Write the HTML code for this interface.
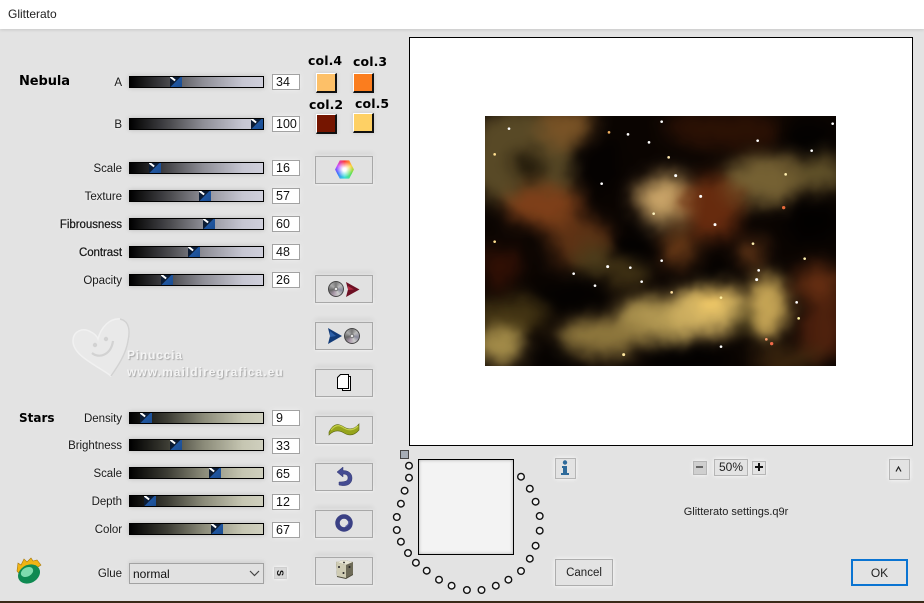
<!DOCTYPE html>
<html>
<head>
<meta charset="utf-8">
<title>Glitterato</title>
<style>
html,body{margin:0;padding:0;width:924px;height:603px;overflow:hidden;background:#e3e3e3;font-family:"Liberation Sans",Arial,sans-serif;color:#111}
#wrap{position:relative;width:924px;height:603px;overflow:hidden}
#wrap>*{position:absolute}
.title{left:0;top:0;width:924px;height:29px;background:#fff;box-shadow:0 1px 3px rgba(0,0,0,.12)}
.tt{left:8px;top:7px;font-size:12px;color:#222}
.l{width:122px;left:0;text-align:right;font-size:11.5px;line-height:14px;color:#1a1a1a;top:0;text-shadow:0 0 3px #f4f4f4;letter-spacing:-.05px}
.s{left:129px;width:133px;height:10px;border:1px solid #000;box-shadow:0 0 5px rgba(0,0,0,.18)}
.n{background:linear-gradient(90deg,#000 0,#4a4a4e 30%,#8e8e96 55%,#c6c6d2 85%,#cfcfdb 100%)}
.g{background:linear-gradient(90deg,#000 0,#3c3c34 28%,#8a8a78 55%,#c6c6b2 85%,#cfcfbe 100%)}
.t{position:absolute;top:0;width:12px;height:10px;background:linear-gradient(135deg,#0c1c34 0,#0c1c34 45%,#1f56a0 50%,#1b4c90 100%);overflow:hidden}
.t:after{content:"";position:absolute;left:1px;top:-1px;width:6px;height:1.5px;background:#fff;transform:rotate(38deg);transform-origin:0 0}
.i{left:272px;height:14px;background:#fff;border:1px solid #a2a2a2;font-size:12.5px;line-height:15px;color:#111;width:26px;box-shadow:0 0 5px rgba(255,255,255,.9),0 0 4px rgba(0,0,0,.08);text-indent:3px}
.b{left:315px;width:56px;height:26px;border:1px solid #a8a8a8;background:#e1e1e1;box-shadow:0 -3px 5px rgba(0,0,0,.07),0 0 3px rgba(255,255,255,.9)}
.c{width:18px;height:17px;border-top:1px solid #fff;border-left:1px solid #fff;border-right:2px solid #111;border-bottom:2px solid #111;box-shadow:0 0 4px rgba(0,0,0,.12)}
.cl{font-family:"DejaVu Sans",sans-serif;font-weight:bold;font-size:12.5px;line-height:14px;color:#000;letter-spacing:.1px}
.h{font-family:"DejaVu Sans",sans-serif;font-weight:bold;color:#000;font-size:13px;line-height:16px}
.sb{background:#e3e3e3;border:1px solid #b6b6b6;box-shadow:0 0 4px rgba(255,255,255,.9);text-align:center;font-size:12px}
</style>
</head>
<body>
<div id="wrap">
<div class="title"></div>
<div class="tt">Glitterato</div>

<div class="h" style="left:19px;top:74px;font-size:13px;letter-spacing:-.1px">Nebula</div>
<div class="h" style="left:19px;top:410px;font-size:12px">Stars</div>

<div class="l" style="top:76px">A</div>
<div class="l" style="top:118px">B</div>
<div class="l" style="top:162px">Scale</div>
<div class="l" style="top:190px">Texture</div>
<div class="l" style="top:218px;-webkit-text-stroke:.2px #000">Fibrousness</div>
<div class="l" style="top:246px;-webkit-text-stroke:.2px #000">Contrast</div>
<div class="l" style="top:274px">Opacity</div>
<div class="l" style="top:412px">Density</div>
<div class="l" style="top:439px">Brightness</div>
<div class="l" style="top:467px">Scale</div>
<div class="l" style="top:495px">Depth</div>
<div class="l" style="top:523px">Color</div>
<div class="l" style="top:567px">Glue</div>

<div class="s n" style="top:76px"><div class="t" style="left:40px"></div></div>
<div class="s n" style="top:118px"><div class="t" style="left:121px"></div></div>
<div class="s n" style="top:162px"><div class="t" style="left:19px"></div></div>
<div class="s n" style="top:190px"><div class="t" style="left:69px"></div></div>
<div class="s n" style="top:218px"><div class="t" style="left:73px"></div></div>
<div class="s n" style="top:246px"><div class="t" style="left:58px"></div></div>
<div class="s n" style="top:274px"><div class="t" style="left:31px"></div></div>
<div class="s g" style="top:412px"><div class="t" style="left:10px"></div></div>
<div class="s g" style="top:439px"><div class="t" style="left:40px"></div></div>
<div class="s g" style="top:467px"><div class="t" style="left:79px"></div></div>
<div class="s g" style="top:495px"><div class="t" style="left:14px"></div></div>
<div class="s g" style="top:523px"><div class="t" style="left:81px"></div></div>

<div class="i" style="top:74px">34</div>
<div class="i" style="top:116px">100</div>
<div class="i" style="top:160px">16</div>
<div class="i" style="top:188px">57</div>
<div class="i" style="top:216px">60</div>
<div class="i" style="top:244px">48</div>
<div class="i" style="top:272px">26</div>
<div class="i" style="top:410px">9</div>
<div class="i" style="top:438px">33</div>
<div class="i" style="top:466px">65</div>
<div class="i" style="top:494px">12</div>
<div class="i" style="top:522px">67</div>

<div class="cl" style="left:308px;top:54px">col.4</div>
<div class="cl" style="left:353px;top:55px">col.3</div>
<div class="cl" style="left:309px;top:98px">col.2</div>
<div class="cl" style="left:355px;top:97px">col.5</div>
<div class="c" style="left:316px;top:73px;background:#fdc068"></div>
<div class="c" style="left:353px;top:73px;background:#fb7d1e"></div>
<div class="c" style="left:316px;top:114px;background:#751500"></div>
<div class="c" style="left:353px;top:113px;background:#fed064"></div>

<div class="b" style="top:156px"></div>
<div class="b" style="top:275px"></div>
<div class="b" style="top:322px"></div>
<div class="b" style="top:369px"></div>
<div class="b" style="top:416px"></div>
<div class="b" style="top:463px"></div>
<div class="b" style="top:510px"></div>
<div class="b" style="top:557px"></div>

<!-- colour hexagon -->
<div style="left:335px;top:160px;width:19px;height:19px;background:conic-gradient(#ff3b3b,#ffd23a,#5fe04a,#38e0d8,#3a6cff,#c84aff,#ff3b3b);clip-path:polygon(25% 2%,75% 2%,100% 50%,75% 98%,25% 98%,0 50%)"></div>
<div style="left:337px;top:162px;width:15px;height:15px;border-radius:50%;background:radial-gradient(#fff 15%,rgba(255,255,255,0) 75%)"></div>

<!-- CD + red arrow -->
<div style="left:328px;top:281px;width:16px;height:16px;border-radius:50%;background:radial-gradient(#e8e8e8 0 10%,#777 12% 18%,rgba(0,0,0,0) 22%),conic-gradient(#777,#bbb,#889,#ccc,#a9a,#666,#aaa,#777);box-shadow:inset 0 0 0 1px #444"></div>
<svg style="left:345px;top:282px" width="15" height="15" viewBox="0 0 15 15"><path d="M1 0 L14.500 7.500 L1 15 L3 7.500Z" fill="#6e1024"/><path d="M3 4 L9 7.500 L3 8Z" fill="#b02a40"/></svg>
<!-- blue arrow + CD -->
<svg style="left:328px;top:328px" width="15" height="16" viewBox="0 0 15 16"><path d="M0 0 L14 8 L0 16 L2 8Z" fill="#123b78"/><path d="M2 3 L8 8 L2 9Z" fill="#2b5fa8"/></svg>
<div style="left:344px;top:328px;width:16px;height:16px;border-radius:50%;background:radial-gradient(#e8e8e8 0 10%,#777 12% 18%,rgba(0,0,0,0) 22%),conic-gradient(#777,#bbb,#889,#ccc,#a9a,#666,#aaa,#777);box-shadow:inset 0 0 0 1px #444"></div>
<!-- pages -->
<svg style="left:335px;top:373px" width="18" height="19" viewBox="0 0 18 19"><path d="M7.500 3.500H15.500V17.500H7.500Z" fill="#fff" stroke="#000"/><path d="M5.500 1.500H13.500V15.500H2.500V4.500Z" fill="#fff" stroke="#000"/></svg>
<!-- wave -->
<svg style="left:328px;top:421px" width="32" height="16" viewBox="0 0 32 16"><path d="M1 11 C6 1 11 3 16 6 C21 9 26 9 31 3 L31 9 C26 15 21 15 16 12 C11 9 6 9 1 14Z" fill="#96a41c" stroke="#5f6a14" stroke-width=".6"/><path d="M3 9 C8 3 12 4 16 7 C21 10 26 9 30 5" fill="none" stroke="#c4cf4a" stroke-width="1.300"/></svg>
<!-- undo -->
<svg style="left:336px;top:467px" width="17" height="20" viewBox="0 0 17 20"><path d="M7 0 L1 5 L7 10 L7 7 C11 7 12 9 12 11 C12 14 9 15 3 15 L3 18 C11 20 16 17 16 11 C16 6 12 3.500 7 3.500Z" fill="#454c92" stroke="#2f3470" stroke-width=".5"/></svg>
<!-- ring -->
<svg style="left:335px;top:514px" width="18" height="18" viewBox="0 0 18 18"><circle cx="9" cy="9" r="6.500" fill="none" stroke="#3a4084" stroke-width="4.500"/><circle cx="8" cy="7" r="6" fill="none" stroke="#6067aa" stroke-width="1" stroke-dasharray="7 40"/></svg>
<!-- dice -->
<svg style="left:334px;top:559px" width="21" height="21" viewBox="0 0 21 21"><path d="M2 3 L10 1 L19 3 L19 16 L12 20 L3 18Z" fill="#4c4a3a"/><path d="M2 3 L10 1 L19 3 L12 6Z" fill="#e8e6d4"/><path d="M2 3 L12 6 L12 19 L3 17Z" fill="#cfccb4"/><path d="M12 6 L19 3 L19 15 L12 19Z" fill="#6e6b58"/><circle cx="10" cy="3.500" r=".9" fill="#222"/><circle cx="5" cy="8" r="1" fill="#222"/><circle cx="9.500" cy="14" r="1" fill="#222"/><circle cx="15.500" cy="8" r="1" fill="#222"/></svg>

<!-- Watermark -->
<svg style="left:68px;top:314px" width="66" height="66" viewBox="0 0 66 66"><path d="M43 62 C30 52 5 42 5 27 C5 17 15 13 23 18 C27 20 29 22 30 25 C33 13 42 4 52 5 C62 7 62 18 60 27 C58 40 50 52 43 62Z" fill="#e9e9e9" stroke="#f1f1f1" stroke-width="1.500"/><path d="M43 62 C50 52 58 40 60 27 C62 18 62 7 52 5" fill="none" stroke="#d2d2d2" stroke-width="1.500"/><circle cx="27" cy="31" r="2.200" fill="#d2d2d2"/><circle cx="38" cy="25" r="2.200" fill="#d2d2d2"/><path d="M24 39 C31 45 43 41 45 27" fill="none" stroke="#d2d2d2" stroke-width="2.200"/></svg>
<div style="left:127px;top:348px;font-size:12px;font-weight:bold;color:#f4f4f4;letter-spacing:.8px;text-shadow:1px 1px 1px #a8a8a8">Pinuccia</div>
<div style="left:127px;top:365px;font-size:12px;font-weight:bold;color:#f4f4f4;letter-spacing:1.05px;text-shadow:1px 1px 1px #a8a8a8;white-space:nowrap">www.maildiregrafica.eu</div>

<!-- Flame logo -->
<svg style="left:15px;top:556px" width="29" height="29" viewBox="0 0 29 29"><path d="M2 15 L3 7 L6 9 L9 3 L12 6 L16 2 L18 5 L22 4 L26 9 L20 13 L8 22Z" fill="#f0b414" stroke="#a87808" stroke-width=".6"/><ellipse cx="14" cy="18" rx="11.500" ry="9" transform="rotate(-28 14 18)" fill="#0f8a52"/><ellipse cx="12" cy="16" rx="6.500" ry="4.500" transform="rotate(-28 12 16)" fill="#7fdcae"/></svg>

<!-- Glue select -->
<div style="left:129px;top:563px;width:133px;height:19px;border:1px solid #a2a2a2;background:#e1e1e1;box-shadow:0 -2px 4px rgba(0,0,0,.08)"></div>
<div style="left:133px;top:567px;font-size:12px;color:#111">normal</div>
<svg style="left:249px;top:570px" width="11" height="7" viewBox="0 0 11 7"><path d="M1 1 L5.500 5.500 L10 1" fill="none" stroke="#444" stroke-width="1.200"/></svg>
<div style="left:274px;top:567px;width:11px;height:10px;border:1px solid #cfcfcf;background:#d8d8d8;box-shadow:0 0 3px #fff;font-size:9px;line-height:10px;text-align:center;font-weight:bold"><span style="display:inline-block;transform:rotate(90deg)">S</span></div>

<!-- Preview -->
<div style="left:409px;top:37px;width:502px;height:407px;background:#fff;border:1px solid #000"></div>
<svg style="left:485px;top:116px;background:#000" width="351" height="250" viewBox="15 18 1053 750">
<defs>
<filter id="blur" x="-20%" y="-20%" width="140%" height="140%" color-interpolation-filters="sRGB">
<feGaussianBlur in="SourceGraphic" stdDeviation="26" result="b"/>
<feTurbulence type="fractalNoise" baseFrequency="0.011" numOctaves="4" seed="11" result="n"/>
<feDisplacementMap in="b" in2="n" scale="42" xChannelSelector="R" yChannelSelector="G" result="d"/>
<feGaussianBlur in="d" stdDeviation="5" result="soft"/>
<feComponentTransfer in="soft">
<feFuncR type="gamma" amplitude="1" exponent="1.200" offset="0"/>
<feFuncG type="gamma" amplitude="1" exponent="1.220" offset="0"/>
<feFuncB type="gamma" amplitude=".950" exponent="1.220" offset="0"/>
</feComponentTransfer>
</filter>
<clipPath id="cp"><rect x="15" y="18" width="1053" height="750"/></clipPath>
</defs>
<g clip-path="url(#cp)">
<g filter="url(#blur)">
<rect x="-50" y="-50" width="1200" height="900" fill="#120a05"/>
<ellipse cx="130" cy="150" rx="170" ry="160" fill="#6a5c38"/>
<ellipse cx="260" cy="50" rx="90" ry="60" fill="#8a6638"/>
<ellipse cx="150" cy="170" rx="45" ry="45" fill="#2a2210"/>
<ellipse cx="190" cy="290" rx="120" ry="65" fill="#8e5228"/>
<ellipse cx="300" cy="400" rx="100" ry="80" fill="#704422"/>
<ellipse cx="60" cy="470" rx="70" ry="65" fill="#401a0a"/>
<ellipse cx="340" cy="450" rx="60" ry="50" fill="#5c4e2a"/>
<ellipse cx="90" cy="620" rx="110" ry="60" fill="#52441f"/>
<ellipse cx="350" cy="170" rx="75" ry="95" fill="#0a0503"/>
<ellipse cx="470" cy="400" rx="65" ry="50" fill="#060302"/>
<ellipse cx="560" cy="270" rx="100" ry="85" fill="#b4986a"/>
<ellipse cx="545" cy="265" rx="55" ry="45" fill="#d4b482"/>
<ellipse cx="700" cy="290" rx="90" ry="100" fill="#783c1a"/>
<ellipse cx="600" cy="420" rx="60" ry="55" fill="#784a24"/>
<ellipse cx="740" cy="60" rx="190" ry="60" fill="#3a1c0a"/>
<ellipse cx="860" cy="210" rx="130" ry="75" fill="#867448"/>
<ellipse cx="1020" cy="190" rx="80" ry="55" fill="#72643c"/>
<ellipse cx="980" cy="80" rx="85" ry="45" fill="#060403"/>
<ellipse cx="1000" cy="340" rx="85" ry="60" fill="#060302"/>
<ellipse cx="810" cy="430" rx="45" ry="45" fill="#704624"/>
<ellipse cx="690" cy="480" rx="85" ry="35" fill="#080402"/>
<ellipse cx="1020" cy="520" rx="80" ry="65" fill="#743e1e"/>
<ellipse cx="1030" cy="660" rx="70" ry="100" fill="#603018"/>
<ellipse cx="270" cy="560" rx="110" ry="45" fill="#080503"/>
<ellipse cx="440" cy="490" rx="70" ry="45" fill="#524422"/>
<ellipse cx="540" cy="630" rx="150" ry="70" fill="#bca668"/>
<ellipse cx="680" cy="600" rx="110" ry="80" fill="#d6bc78"/>
<ellipse cx="695" cy="575" rx="45" ry="45" fill="#f6d480"/>
<ellipse cx="860" cy="590" rx="65" ry="100" fill="#ceb26c"/>
<ellipse cx="360" cy="680" rx="130" ry="60" fill="#9c8852"/>
<ellipse cx="790" cy="640" rx="22" ry="45" fill="#3a3418"/>
<ellipse cx="60" cy="710" rx="80" ry="60" fill="#b09c60"/>
<ellipse cx="220" cy="745" rx="60" ry="30" fill="#080503"/>
<ellipse cx="620" cy="745" rx="125" ry="45" fill="#060302"/>
<ellipse cx="920" cy="750" rx="110" ry="35" fill="#523a1c"/>
</g>
<g fill="#fff">
<circle cx="87" cy="56" r="4"/><circle cx="387" cy="67" r="4" fill="#f0b060"/><circle cx="444" cy="73" r="4"/><circle cx="545" cy="35" r="4"/><circle cx="507" cy="97" r="4"/><circle cx="833" cy="92" r="4"/><circle cx="995" cy="122" r="4"/><circle cx="1058" cy="41" r="4"/><circle cx="44" cy="133" r="4" fill="#ffe090"/><circle cx="566" cy="142" r="4" fill="#ffe8b0"/><circle cx="917" cy="193" r="4" fill="#fff0b0"/><circle cx="587" cy="197" r="4.500"/><circle cx="365" cy="221" r="4"/><circle cx="662" cy="259" r="4.500"/><circle cx="521" cy="311" r="4" fill="#fff4c0"/><circle cx="911" cy="293" r="5" fill="#e86a3a"/><circle cx="705" cy="344" r="4.500"/><circle cx="44" cy="395" r="4" fill="#ffe090"/><circle cx="819" cy="401" r="4" fill="#fff0b0"/><circle cx="974" cy="446" r="4" fill="#fff0b0"/><circle cx="545" cy="452" r="4"/><circle cx="383" cy="470" r="4.500"/><circle cx="451" cy="473" r="4"/><circle cx="281" cy="491" r="4"/><circle cx="836" cy="481" r="4"/><circle cx="830" cy="509" r="4.500"/><circle cx="485" cy="515" r="4"/><circle cx="345" cy="527" r="4"/><circle cx="575" cy="547" r="4" fill="#ffe0a0"/><circle cx="723" cy="563" r="4" fill="#fff0a0"/><circle cx="950" cy="577" r="4"/><circle cx="956" cy="625" r="4" fill="#fff4a0"/><circle cx="859" cy="688" r="4" fill="#ffa070"/><circle cx="875" cy="701" r="5" fill="#f06a4a"/><circle cx="723" cy="710" r="4"/><circle cx="431" cy="734" r="4.500" fill="#ffe8a0"/>
</g>
</g>
</svg>

<!-- Small preview + beads -->
<div style="left:418px;top:459px;width:94px;height:94px;background:#f3f3f3;border:1.500px solid #000;box-shadow:inset 0 0 3px rgba(0,0,0,.3)"></div>
<div style="left:400px;top:450px;width:7px;height:7px;background:#a6adb6;border:1px solid #444"></div>
<svg style="left:390px;top:455px" width="160" height="145" viewBox="390 455 160 145"><g fill="#f2f2f2" stroke="#111" stroke-width="1.400">
<circle cx="409" cy="465.700" r="3.300"/><circle cx="409" cy="477.700" r="3.300"/><circle cx="404.600" cy="490.700" r="3.300"/><circle cx="400.900" cy="503.700" r="3.300"/><circle cx="396.800" cy="517" r="3.300"/><circle cx="396.800" cy="530" r="3.300"/><circle cx="400.900" cy="541.700" r="3.300"/><circle cx="408" cy="553" r="3.300"/><circle cx="415.900" cy="562.700" r="3.300"/><circle cx="426.700" cy="570.700" r="3.300"/><circle cx="439" cy="579.700" r="3.300"/><circle cx="451.600" cy="585.700" r="3.300"/><circle cx="466.900" cy="590" r="3.300"/><circle cx="481.500" cy="590" r="3.300"/><circle cx="495.800" cy="585.700" r="3.300"/><circle cx="508.400" cy="579.700" r="3.300"/><circle cx="521" cy="571" r="3.300"/><circle cx="529.800" cy="558.700" r="3.300"/><circle cx="535.600" cy="545.700" r="3.300"/><circle cx="539.700" cy="530.700" r="3.300"/><circle cx="539.700" cy="516" r="3.300"/><circle cx="535.600" cy="501.700" r="3.300"/><circle cx="529.800" cy="488.700" r="3.300"/><circle cx="521" cy="476.700" r="3.300"/>
</g></svg>

<!-- Right controls -->
<div class="sb" style="left:555px;top:458px;width:19px;height:19px"></div>
<svg style="left:560px;top:460px" width="10" height="16" viewBox="0 0 10 16"><circle cx="5" cy="2.500" r="2.200" fill="#2e6a9a"/><path d="M2 6H7V13H9V15H1V13H3V8H2Z" fill="#2e6a9a"/></svg>
<div class="sb" style="left:693px;top:461px;width:12px;height:12px;background:#cfcfcf"></div>
<div style="left:696px;top:466px;width:7px;height:2px;background:#666"></div>
<div class="sb" style="left:714px;top:459px;width:32px;height:15px;line-height:15px;color:#222">50%</div>
<div class="sb" style="left:752px;top:461px;width:12px;height:12px"></div>
<div style="left:755px;top:466px;width:8px;height:2px;background:#111"></div>
<div style="left:758px;top:463px;width:2px;height:8px;background:#111"></div>
<div class="sb" style="left:889px;top:459px;width:19px;height:19px"></div>
<svg style="left:895px;top:466px" width="7" height="6" viewBox="0 0 7 6"><path d="M1 5.500 L3.500 1 L6 5.500" fill="none" stroke="#222" stroke-width="1.200"/></svg>
<div style="left:640px;top:505px;width:192px;text-align:center;font-size:11px;line-height:14px;color:#222">Glitterato settings.q9r</div>
<div style="left:555px;top:559px;width:56px;height:25px;border:1px solid #adadad;background:#e3e3e3;text-align:center;font-size:11.500px;line-height:26px;color:#222;box-shadow:0 0 4px rgba(255,255,255,.9)">Cancel</div>
<div style="left:851px;top:559px;width:53px;height:23px;border:2px solid #0a74d2;background:#e3e3e3;text-align:center;font-size:12px;line-height:24px;color:#222">OK</div>

<div style="left:0;top:601px;width:924px;height:2px;background:#3a2a18"></div>
</div>
</body>
</html>
